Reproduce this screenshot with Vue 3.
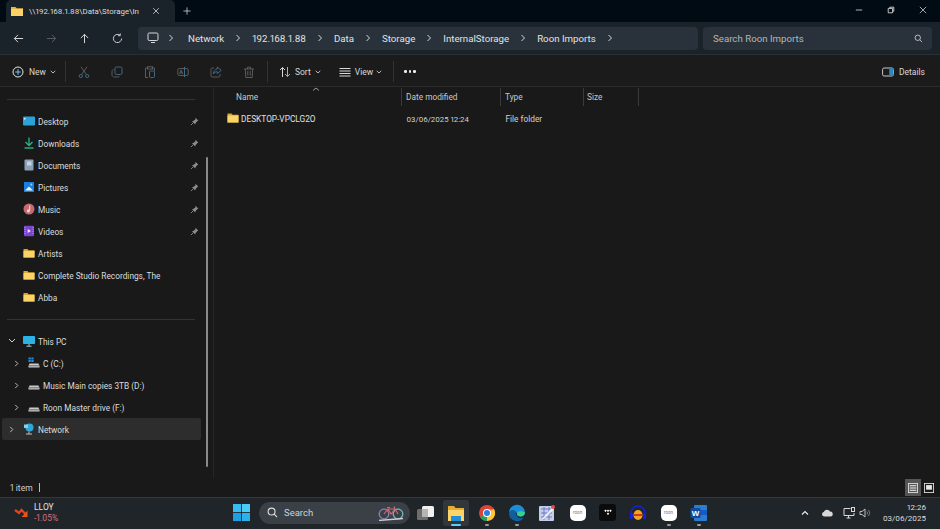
<script setup>
const crumbs = ['Network', '192.168.1.88', 'Data', 'Storage', 'InternalStorage', 'Roon Imports']

const quick = [
  { label: 'Desktop', icon: 'desktop', pin: true },
  { label: 'Downloads', icon: 'downloads', pin: true },
  { label: 'Documents', icon: 'documents', pin: true },
  { label: 'Pictures', icon: 'pictures', pin: true },
  { label: 'Music', icon: 'music', pin: true },
  { label: 'Videos', icon: 'videos', pin: true },
  { label: 'Artists', icon: 'folder' },
  { label: 'Complete Studio Recordings, The', icon: 'folder' },
  { label: 'Abba', icon: 'folder' }
]

const drives = [
  { label: 'C (C:)', win: true },
  { label: 'Music Main copies 3TB (D:)' },
  { label: 'Roon Master drive (F:)' }
]

const columns = [
  { label: 'Name', width: 187, pad: 21 },
  { label: 'Date modified', width: 99, pad: 4 },
  { label: 'Type', width: 83, pad: 4 },
  { label: 'Size', width: 55, pad: 3 }
]
</script>

<template>
  <div class="screen">
    <!-- Tabs -->
    <div class="titlebar">
      <div class="tab">
        <svg class="tab-folder" viewBox="0 0 12 12"><path d="M0 2h4.5l1.2 1.2H12V11H0z" fill="#e9b33f"/><path d="M0 4h12v7H0z" fill="#fbd266"/></svg>
        <span class="tab-title">\\192.168.1.88\Data\Storage\In</span>
        <svg class="tab-close" viewBox="0 0 10 10"><path d="M1.5 1.5l7 7M8.5 1.5l-7 7" stroke="#d8d8d8" fill="none"/></svg>
      </div>
      <svg class="tab-add" viewBox="0 0 10 10"><path d="M5 .5v9M.5 5h9" stroke="#d0d0d0" fill="none"/></svg>
      <div class="window-btns">
        <svg viewBox="0 0 10 10"><path d="M1 5h8" stroke="#bbb" stroke-width="1.2"/></svg>
        <svg viewBox="0 0 10 10"><path d="M1.5 3h5.5v5.5H1.5zM3.5 3V1.5h5v5H7" stroke="#ccc" fill="none" stroke-width="1.2"/></svg>
        <svg viewBox="0 0 10 10"><path d="M1 1l8 8M9 1l-8 8" stroke="#ccc" fill="none"/></svg>
      </div>
    </div>

    <!-- Address row -->
    <div class="addressbar">
      <div class="nav">
        <svg viewBox="0 0 12 12"><path d="M11 6H1.5M5.5 2L1.5 6l4 4" stroke="#e6e6e6" fill="none"/></svg>
        <svg viewBox="0 0 12 12"><path d="M1 6h9.5M6.5 2l4 4-4 4" stroke="#5d6367" fill="none"/></svg>
        <svg viewBox="0 0 12 12"><path d="M6 11V1.5M2 5.5l4-4 4 4" stroke="#e6e6e6" fill="none"/></svg>
        <svg viewBox="0 0 12 12"><path d="M10.5 6A4.5 4.5 0 1 1 8.6 2.3M9 .5v2.4H6.6" stroke="#dcdcdc" fill="none"/></svg>
      </div>
      <div class="crumbs">
        <svg class="crumb-pc" viewBox="0 0 12 12"><rect x="1" y="1" width="10" height="7.5" rx="1.2" stroke="#d8d8d8" fill="none"/><path d="M4 10.5h4" stroke="#d8d8d8"/></svg>
        <template v-for="c in crumbs" :key="c">
          <svg class="chev" viewBox="0 0 6 8"><path d="M1.5 1l3 3-3 3" stroke="#d8d8d8" fill="none"/></svg>
          <span class="crumb">{{ c }}</span>
        </template>
        <svg class="chev" viewBox="0 0 6 8"><path d="M1.5 1l3 3-3 3" stroke="#d8d8d8" fill="none"/></svg>
      </div>
      <div class="searchbox">
        <span>Search Roon Imports</span>
        <svg viewBox="0 0 10 10"><circle cx="4.2" cy="4.2" r="3" stroke="#c8c8c8" fill="none"/><path d="M6.4 6.4L9 9" stroke="#c8c8c8"/></svg>
      </div>
    </div>

    <!-- Command bar -->
    <div class="toolbar">
      <div class="new">
        <svg class="cmd-ico" viewBox="0 0 12 12"><circle cx="6" cy="6" r="5" stroke="#e4e4e4" fill="none"/><path d="M6 3.2v5.6M3.2 6h5.6" stroke="#6cc4ee"/></svg>
        <span>New</span>
        <svg class="caret" viewBox="0 0 6 4"><path d="M.7 .8L3 3l2.3-2.2" stroke="#bbb" fill="none"/></svg>
      </div>
      <i class="tool-div first"></i>
      <div class="disabled-tools">
        <svg viewBox="0 0 12 12"><circle cx="2.8" cy="10" r="1.6" stroke="#3e6a85" fill="none"/><circle cx="9.2" cy="10" r="1.6" stroke="#3e6a85" fill="none"/><path d="M3.6 8.6L9 .8M8.4 8.6L3 .8" stroke="#5c5c5c" fill="none"/></svg>
        <svg viewBox="0 0 12 12"><rect x="4" y="1" width="7" height="7.5" rx="1.5" stroke="#3e6a85" fill="none"/><path d="M2.6 3.4C1.6 3.8 1 4.4 1 5.5v3.2C1 10 2 11 3.4 11h3.4c.8 0 1.4-.4 1.7-1" stroke="#5c5c5c" fill="none"/></svg>
        <svg viewBox="0 0 12 12"><path d="M3 2H1.5v9.500H4M9 2h1.500v3" stroke="#5c5c5c" fill="none"/><rect x="3.500" y=".8" width="5" height="2.200" stroke="#5c5c5c" fill="none"/><rect x="5.500" y="5" width="5" height="6.500" rx="1" stroke="#3e6a85" fill="none"/></svg>
        <svg viewBox="0 0 12 12"><rect x=".8" y="2.500" width="10.400" height="7" rx="1.500" stroke="#5c5c5c" fill="none"/><path d="M2.600 8l1.500-4 1.500 4M3.200 6.800h1.800" stroke="#5c5c5c" fill="none"/><path d="M7.500 .8v10.400" stroke="#3e6a85"/></svg>
        <svg viewBox="0 0 12 12"><path d="M4 2H2.300A1.300 1.300 0 0 0 1 3.300v6.400A1.300 1.300 0 0 0 2.300 11h6.400A1.300 1.300 0 0 0 10 9.700V8" stroke="#5c5c5c" fill="none"/><path d="M7.200 1l4 3.300-4 3.300V5.700C5.500 5.700 4 6.500 3.500 8c0-3 1.500-4.800 3.700-5z" stroke="#3e6a85" fill="none"/></svg>
        <svg viewBox="0 0 12 12"><path d="M1 3h10M4.500 3V1.200h3V3M2.300 3l.5 8.500h6.400l.5-8.500M4.800 5v4.500M7.200 5v4.500" stroke="#5c5c5c" fill="none"/></svg>
      </div>
      <i class="tool-div second"></i>
      <div class="sort">
        <svg class="cmd-ico" viewBox="0 0 12 12"><path d="M3.500 11V1.500M1 4l2.500-2.500L6 4" stroke="#d8d8d8" fill="none"/><path d="M8.500 1v9.500M6 8l2.500 2.500L11 8" stroke="#6cc4ee" fill="none"/></svg>
        <span>Sort</span>
        <svg class="caret" viewBox="0 0 6 4"><path d="M.7 .8L3 3l2.300-2.200" stroke="#bbb" fill="none"/></svg>
      </div>
      <div class="view">
        <svg class="cmd-ico" viewBox="0 0 12 12"><path d="M.5 2.500h11M.5 5h11M.5 7.500h11M.5 10h11" stroke="#d8d8d8" fill="none"/></svg>
        <span>View</span>
        <svg class="caret" viewBox="0 0 6 4"><path d="M.7 .8L3 3l2.300-2.200" stroke="#bbb" fill="none"/></svg>
      </div>
      <i class="tool-div third"></i>
      <div class="more"><b></b><b></b><b></b></div>
      <div class="details">
        <svg class="cmd-ico" viewBox="0 0 12 12"><rect x=".6" y="2" width="10.800" height="8" rx="1.500" stroke="#c8c8c8" fill="none"/><rect x="7.200" y="2" width="4.200" height="8" rx="1" fill="#2f86b8"/></svg>
        <span>Details</span>
      </div>
    </div>

    <div class="body">
      <!-- Navigation pane -->
      <aside class="sidebar">
        <div class="sep"></div>
        <div v-for="r in quick" :key="r.label" class="row">
          <svg class="row-ico" viewBox="0 0 12 12">
            <template v-if="r.icon === 'desktop'">
              <rect y="1.500" width="12" height="9" rx="1" fill="#2ba3d9"/><rect x="1" y="3" width="1.500" height="1.500" fill="#d9f2ff"/>
            </template>
            <template v-else-if="r.icon === 'downloads'">
              <path d="M6 .5v7.500M2.500 5L6 8.500 9.500 5" stroke="#27b58c" stroke-width="1.300" fill="none"/><path d="M1.500 11h9" stroke="#27b58c" stroke-width="1.400"/>
            </template>
            <template v-else-if="r.icon === 'documents'">
              <rect x="1.500" y=".5" width="9" height="11" rx="1" fill="#8ca1b8"/><rect x="4" y="2.500" width="4.500" height="4" fill="#c5d4e2"/>
            </template>
            <template v-else-if="r.icon === 'pictures'">
              <rect x="1" y="1" width="10" height="10" fill="#1a7fe0"/><path d="M2 9.500L6 5.500l4 4z" fill="#e8f3fb"/><circle cx="8.300" cy="3.500" r="1" fill="#9dd3f7"/>
            </template>
            <template v-else-if="r.icon === 'music'">
              <circle cx="6" cy="6" r="5.500" fill="#c76a6f"/><path d="M6.700 2.500v5" stroke="#f5dfe2" stroke-width="1"/><circle cx="5.400" cy="8" r="1.400" fill="#f5dfe2"/>
            </template>
            <template v-else-if="r.icon === 'videos'">
              <rect x="1" y=".8" width="10" height="10.400" rx="1" fill="#7b45cf"/><path d="M4.700 4v4l3.300-2z" fill="#f0e8fb"/><path d="M2 2v8M10 2v8" stroke="#b99aea" stroke-dasharray="1 1"/>
            </template>
            <template v-else>
              <path d="M.5 2h4l1 1.200h6V10.500H.5z" fill="#dca431"/><path d="M.5 4h11v6.500H.5z" fill="#fbd468"/>
            </template>
          </svg>
          <span class="row-label">{{ r.label }}</span>
          <svg v-if="r.pin" class="pin" viewBox="0 0 10 10"><path d="M6 .8l3.200 3.200-1.300.6-1.800 2.400-.3 1.400L2.200 4.800l1.400-.3L6 2.700z" fill="#8d8d8d"/><path d="M3.600 6.400L1 9" stroke="#8d8d8d"/></svg>
        </div>
        <div class="sep lower"></div>
        <div class="row">
          <svg class="tree open" viewBox="0 0 8 6"><path d="M1 1l3 3 3-3" stroke="#d0d0d0" fill="none"/></svg>
          <svg class="row-ico" viewBox="0 0 12 12"><rect y="1" width="12" height="8" rx=".8" fill="#2cb2e4"/><path d="M6 9v1.800M3.500 11.200h5" stroke="#a9cfe0"/></svg>
          <span class="row-label">This PC</span>
        </div>
        <div v-for="d in drives" :key="d.label" class="row drive">
          <svg class="tree" viewBox="0 0 6 8"><path d="M1.500 1l3 3-3 3" stroke="#d0d0d0" fill="none"/></svg>
          <svg class="row-ico" viewBox="0 0 12 12">
            <template v-if="d.win"><path d="M.5 .5h2.300v2H.5zM3.300 .5h2.300v2H3.300zM.5 3h2.300v2H.5zM3.300 3h2.300v2H3.300z" fill="#1c8fe0"/></template>
            <path d="M1.500 6.500h9l1 2.500v1.500H.5V9z" fill="#c9c9c9"/><path d="M1 8.800h10" stroke="#6d6d6d"/>
          </svg>
          <span class="row-label">{{ d.label }}</span>
        </div>
        <div class="row selected">
          <svg class="tree" viewBox="0 0 6 8"><path d="M1.500 1l3 3-3 3" stroke="#d0d0d0" fill="none"/></svg>
          <svg class="row-ico" viewBox="0 0 12 12"><circle cx="6.500" cy="4.500" r="4" fill="#2fa8d8"/><path d="M1 1.500h4v3.500H1z" fill="#7fd3f0"/><path d="M6 8.500v2.300M3 11h6" stroke="#b8c8d0"/></svg>
          <span class="row-label">Network</span>
        </div>
        <div class="thumb"></div>
      </aside>

      <!-- File list -->
      <main class="list">
        <div class="head">
          <svg class="sort-mark" viewBox="0 0 8 4"><path d="M1 3.500L4 1l3 2.500" stroke="#9a9a9a" fill="none"/></svg>
          <div v-for="c in columns" :key="c.label" class="col" :style="{ width: c.width + 'px', paddingLeft: c.pad + 'px' }">{{ c.label }}</div>
        </div>
        <div class="file">
          <svg class="file-ico" viewBox="0 0 12 12"><path d="M.5 1.500h4l1 1.200h6V10.500H.5z" fill="#dca431"/><path d="M.5 3.500h11v7H.5z" fill="#fbd468"/></svg>
          <span class="file-name">DESKTOP-VPCLG2O</span>
          <span class="file-date">03/06/2025 12:24</span>
          <span>File folder</span>
        </div>
      </main>
    </div>

    <!-- Status bar -->
    <div class="status">
      <span>1 item</span>
      <i class="status-bar"></i>
      <div class="layout-btns">
        <div class="layout-btn on">
          <svg viewBox="0 0 12 12"><rect x=".5" y=".5" width="11" height="11" fill="none" stroke="#e6e6e6"/><path d="M2 3h8M2 5h8M2 7h8M2 9h8" stroke="#e6e6e6"/></svg>
        </div>
        <div class="layout-btn">
          <svg viewBox="0 0 12 12"><rect x=".5" y=".5" width="11" height="11" fill="none" stroke="#e6e6e6"/><rect x="2.500" y="2.500" width="7" height="5.500" fill="#e6e6e6"/></svg>
        </div>
      </div>
    </div>

    <!-- Taskbar -->
    <div class="taskbar">
      <div class="widget">
        <svg viewBox="0 0 16 12"><path d="M1 3l4 3 2.500-3L12 7.500" stroke="#e8431c" stroke-width="2.200" fill="none"/><path d="M13.500 3.500v6.500H7.500z" fill="#e8561c"/></svg>
        <div class="ticker">
          <span class="ticker-name">LLOY</span>
          <span class="ticker-val">-1.05%</span>
        </div>
      </div>
      <svg class="winlogo" viewBox="0 0 16 16">
        <rect width="7.600" height="7.600" fill="#37bdf0"/><rect x="8.400" width="7.600" height="7.600" fill="#49ccf5"/>
        <rect y="8.400" width="7.600" height="7.600" fill="#1f9fe3"/><rect x="8.400" y="8.400" width="7.600" height="7.600" fill="#2cb2ea"/>
      </svg>
      <div class="tb-search">
        <svg class="tb-lens" viewBox="0 0 12 12"><circle cx="5" cy="5" r="3.800" stroke="#e0e0e0" fill="none" stroke-width="1.200"/><path d="M7.800 7.800L11 11" stroke="#e0e0e0" stroke-width="1.200"/></svg>
        <span>Search</span>
        <svg class="bike" viewBox="0 0 26 16">
          <circle cx="6" cy="9" r="4.800" stroke="#8d7fb0" fill="none" stroke-width="1.300"/>
          <circle cx="20" cy="9" r="4.800" stroke="#74b4c4" fill="none" stroke-width="1.300"/>
          <path d="M6 9l4-5h7l3 5M10 4l3 5 4-5M9 2.500h3M16 1.500l1 2.500" stroke="#d9656f" fill="none" stroke-width="1.200"/>
          <path d="M1 15.500l24-2" stroke="#c9cfd4" stroke-width="1.300"/>
        </svg>
      </div>
      <div class="apps">
        <div class="app">
          <svg viewBox="0 0 18 16"><rect y="4" width="11" height="11" rx="1.500" fill="#6d6d6d"/><rect x="5" y="1" width="12" height="11" rx="1.500" fill="#f0f0f0"/><rect x="5" y="4" width="6" height="8" fill="#b5b5b5"/></svg>
        </div>
        <div class="app active">
          <svg viewBox="0 0 18 18"><path d="M1 2h6l1.500 2H17v13H1z" fill="#e6ad2e"/><path d="M1 6h16v11H1z" fill="#fcd467"/><rect x="4" y="12" width="10" height="5" fill="#1f8fd6"/></svg>
          <i class="dot wide"></i>
        </div>
        <div class="app">
          <svg viewBox="0 0 18 18"><circle cx="9" cy="9" r="8" fill="#dd4437"/><path d="M9 9L2 13a8 8 0 0 0 7 4z" fill="#1ea362"/><path d="M9 9l7-4a8 8 0 0 1-3 11l-4 1z" fill="#fcc934"/><path d="M9 5h7l-3 7-8 1z" fill="#fcc934" opacity=".4"/><circle cx="9" cy="9" r="4" fill="#fff"/><circle cx="9" cy="9" r="3" fill="#2a7de1"/></svg>
          <i class="dot"></i>
        </div>
        <div class="app">
          <svg viewBox="0 0 18 18"><path d="M1 9a8 8 0 0 1 16-.5c0 3-2.500 4-4.500 4-2.500 0-3.500-1-3.500-2.500 0-3-8-3-8-1z" fill="#1a8fd8"/><path d="M1 9c1-4 7-4 7 0 0 4 4 7 8 4a8 8 0 0 1-15-4z" fill="#0f5f9f"/><path d="M17 8.500c0 2-2 4-4.500 4-2.500 0-3.500-1-3.500-2.500 0-2 2-4 8-1.500z" fill="#38d08a"/></svg>
          <i class="dot"></i>
        </div>
        <div class="app">
          <svg viewBox="0 0 18 18"><rect x="1" y="2" width="15" height="15" rx="1" fill="#c6cdea"/><path d="M3 5h11M3 9h11M3 13h11M6 3v13M11 3v13" stroke="#5a6bc4" stroke-width=".8"/><path d="M4 15l10-11 1.500 1.500L6 15z" fill="#f2f2f2"/><circle cx="15" cy="3" r="2" fill="#d9534f"/></svg>
        </div>
        <div class="app"><div class="roon">roon</div></div>
        <div class="app">
          <div class="tidal"><svg viewBox="0 0 12 8"><path d="M3 .5l1.500 1.500L3 3.500 1.500 2zM6 .5l1.500 1.500L6 3.500 4.500 2zM9 .5l1.500 1.500L9 3.500 7.500 2zM6 4l1.500 1.500L6 7 4.500 5.500z" fill="#fff"/></svg></div>
        </div>
        <div class="app">
          <svg viewBox="0 0 18 18"><path d="M2 11V9a7 7 0 0 1 14 0v2" stroke="#1323d8" stroke-width="1.500" fill="none"/><rect x="1" y="9" width="3" height="6" rx="1.200" fill="#1323d8"/><rect x="14" y="9" width="3" height="6" rx="1.200" fill="#1323d8"/><ellipse cx="9" cy="11" rx="4.500" ry="5" fill="#f2a51c"/><path d="M4.500 11h9" stroke="#d42a1e" stroke-width="1.800"/></svg>
        </div>
        <div class="app"><div class="roon">roon</div><i class="dot"></i></div>
        <div class="app">
          <svg viewBox="0 0 18 18"><rect x="4" y="1" width="13" height="16" rx="1" fill="#2b7cd3"/><path d="M4 6h13v5H4z" fill="#185abd"/><rect x=".5" y="4" width="10" height="10" rx="1" fill="#124a9e"/><text x="5.500" y="12" text-anchor="middle" class="word-w">W</text></svg>
          <i class="dot"></i>
        </div>
      </div>
      <div class="tray">
        <svg class="tray-chev" viewBox="0 0 8 6"><path d="M1 4.500L4 1.500l3 3" stroke="#eee" fill="none" stroke-width="1.100"/></svg>
        <svg class="tray-cloud" viewBox="0 0 12 8"><path d="M3 7.500a2.300 2.300 0 0 1-.3-4.500A3.500 3.500 0 0 1 9 2.500a2.500 2.500 0 0 1 .5 5z" fill="#d8d8d8"/></svg>
        <svg class="tray-net" viewBox="0 0 12 12"><path d="M7.500 1.500H1v7h10V6M3.500 11h4M5.500 8.500V11" stroke="#d8d8d8" fill="none"/><rect x="8.500" y=".5" width="3" height="4" stroke="#d8d8d8" fill="none"/></svg>
        <svg class="tray-vol" viewBox="0 0 12 12"><path d="M1 4.500h2l3-2.500v8L3 7.500H1z" stroke="#bdbdbd" fill="none"/><path d="M8 4.500a2.500 2.500 0 0 1 0 3M9.500 3a4.500 4.500 0 0 1 0 6" stroke="#777" fill="none"/></svg>
        <div class="clock">
          <span>12:26</span>
          <span>03/06/2025</span>
        </div>
      </div>
    </div>
  </div>
</template>

<style scoped>
.screen {
  width: 940px;
  height: 529px;
  display: flex;
  flex-direction: column;
  overflow: hidden;
  background: #191919;
  color: #d6d6d6;
  font-family: Roboto, "Noto Sans", sans-serif;
  font-size: 9px;
  font-feature-settings: "pnum";
}

svg {
  display: block;
  flex: none;
}

/* title bar */
.titlebar {
  height: 22px;
  flex: none;
  display: flex;
  align-items: flex-end;
  background: #010b14;
  padding-left: 6px;
}
.tab {
  width: 164px;
  height: 22px;
  display: flex;
  align-items: center;
  background: #1b232a;
  border-radius: 5px 5px 0 0;
  padding-left: 5px;
}
.tab-folder {
  width: 12px;
  height: 12px;
}
.tab-title {
  width: 114px;
  margin-left: 6px;
  white-space: nowrap;
  font-size: 7.9px;
  color: #dcdcdc;
}
.tab-close {
  width: 8px;
  height: 8px;
  margin-left: 9px;
}
.tab-add {
  width: 8px;
  height: 8px;
  margin: 0 0 7px 8px;
}
.window-btns {
  margin-left: auto;
  align-self: center;
  display: flex;
  gap: 24px;
  padding-right: 13px;
}
.window-btns svg {
  width: 8px;
  height: 8px;
  margin-top: -3px;
}

/* address row */
.addressbar {
  height: 33px;
  flex: none;
  display: flex;
  align-items: center;
  background: #1b232a;
  border-bottom: 1px solid #2a3036;
  box-sizing: border-box;
}
.nav {
  width: 138px;
  display: flex;
  gap: 22px;
  padding-left: 13px;
  box-sizing: border-box;
}
.nav svg {
  width: 11px;
  height: 11px;
}
.crumbs {
  width: 560px;
  height: 23px;
  display: flex;
  align-items: center;
  background: #29323a;
  border-radius: 4px;
  font-size: 9.7px;
  color: #e2e2e2;
  padding-left: 9px;
  box-sizing: border-box;
}
.crumb-pc {
  width: 12px;
  height: 12px;
}
.chev {
  width: 6px;
  height: 8px;
  margin: 0 11px 0 11px;
}
.crumb-pc + .chev {
  margin-left: 9px;
  margin-right: 14px;
}
.searchbox {
  width: 229px;
  height: 23px;
  margin-left: 5px;
  display: flex;
  align-items: center;
  justify-content: space-between;
  background: #29323a;
  border-radius: 4px;
  padding: 0 9px 0 10px;
  box-sizing: border-box;
  font-size: 9.7px;
  color: #b3b6b9;
}
.searchbox svg {
  width: 9px;
  height: 9px;
}

/* command bar */
.toolbar {
  height: 32px;
  flex: none;
  display: flex;
  align-items: center;
  background: #1c1b1b;
  border-bottom: 1px solid #2c2c2c;
  box-sizing: border-box;
  padding-top: 2px;
  color: #d8d8d8;
  font-size: 8.5px;
}
.cmd-ico {
  width: 12px;
  height: 12px;
}
.caret {
  width: 6px;
  height: 4px;
}
.new {
  display: flex;
  align-items: center;
  margin-left: 12px;
}
.new span {
  margin: 0 4px 0 5px;
}
.tool-div {
  width: 1px;
  height: 21px;
  background: #333;
}
.tool-div.first {
  margin-left: 9px;
}
.disabled-tools {
  display: flex;
  gap: 21px;
  margin-left: 12px;
}
.disabled-tools svg {
  width: 12px;
  height: 12px;
}
.tool-div.second {
  margin-left: 12px;
}
.sort {
  display: flex;
  align-items: center;
  margin-left: 11px;
}
.sort span {
  margin: 0 4px;
}
.view span {
  margin: 0 3px 0 4px;
}
.view {
  display: flex;
  align-items: center;
  margin-left: 18px;
}
.tool-div.third {
  margin-left: 11px;
}
.more {
  display: flex;
  gap: 2px;
  margin-left: 10px;
}
.more b {
  width: 2.5px;
  height: 2.5px;
  border-radius: 50%;
  background: #eee;
}
.details {
  margin-left: auto;
  margin-right: 15px;
  display: flex;
  align-items: center;
  gap: 5px;
}

/* panes */
.body {
  flex: 1;
  min-height: 0;
  display: flex;
}
.sidebar {
  position: relative;
  width: 214px;
  flex: none;
  border-right: 1px solid #262626;
  box-sizing: border-box;
  padding: 12px 0 0 2px;
  font-size: 8.3px;
}
.sep {
  height: 1px;
  width: 188px;
  margin: 0 0 10px 5px;
  background: #333;
}
.sep.lower {
  margin-top: 11px;
}
.row {
  height: 22px;
  width: 199px;
  display: flex;
  align-items: center;
  padding-left: 21px;
  box-sizing: border-box;
  color: #dcdcdc;
  white-space: nowrap;
  border-radius: 2px;
}
.row-label {
  padding-top: 1px;
}
.row-ico {
  width: 12px;
  height: 12px;
  margin-right: 3px;
}
.pin {
  width: 9px;
  height: 9px;
  margin-left: auto;
  margin-right: 2px;
}
.tree {
  width: 7px;
  height: 7px;
  margin-left: -15px;
  margin-right: 8px;
}
.tree.open {
  width: 8px;
  height: 6px;
  margin-right: 7px;
}
.drive {
  padding-left: 26px;
}
.selected {
  background: #2d2d2d;
}
.thumb {
  position: absolute;
  right: 5px;
  top: 70px;
  width: 2px;
  height: 310px;
  background: #8a8a8a;
  border-radius: 1px;
}

/* file list */
.list {
  flex: 1;
  min-width: 0;
  color: #d2d2d2;
}
.head {
  position: relative;
  height: 19px;
  display: flex;
  align-items: center;
  margin-left: 1px;
  font-size: 8.3px;
  color: #c8c8c8;
}
.col {
  height: 18px;
  display: flex;
  align-items: center;
  box-sizing: border-box;
  border-right: 1px solid #3a3a3a;
}
.sort-mark {
  position: absolute;
  left: 97px;
  top: 0;
  width: 8px;
  height: 4px;
}
.file {
  height: 22px;
  margin-top: 2px;
  display: flex;
  align-items: center;
  font-size: 8.3px;
}
.file-ico {
  width: 12px;
  height: 12px;
  margin-left: 13px;
  margin-top: -2px;
}
.file-name {
  width: 165.500px;
  margin-left: 2px;
  color: #e0e0e0;
}
.file-date {
  width: 99px;
  font-size: 7.8px;
}

/* status bar */
.status {
  height: 19px;
  flex: none;
  display: flex;
  align-items: center;
  background: #191919;
  padding-left: 10px;
  font-size: 8.5px;
  color: #cfcfcf;
}
.status-bar {
  width: 1px;
  height: 9px;
  margin-left: 6px;
  background: #bbb;
}
.layout-btns {
  margin-left: auto;
  margin-right: 3px;
  display: flex;
}
.layout-btn {
  width: 16px;
  height: 17px;
  display: flex;
  align-items: center;
  justify-content: center;
}
.layout-btn svg {
  width: 10px;
  height: 10px;
}
.layout-btn.on {
  background: #555;
}

/* taskbar */
.taskbar {
  height: 32px;
  flex: none;
  display: flex;
  align-items: center;
  background: #20252a;
  border-top: 1px solid #34383c;
  box-sizing: border-box;
  padding-bottom: 2px;
}
.widget {
  width: 233px;
  display: flex;
  align-items: center;
  padding-left: 14px;
  box-sizing: border-box;
}
.widget svg {
  width: 16px;
  height: 12px;
}
.ticker {
  display: flex;
  flex-direction: column;
  margin-left: 4px;
  line-height: 11px;
  font-size: 8.500px;
}
.ticker-name {
  color: #e4e4e4;
}
.ticker-val {
  color: #d8707e;
}
.winlogo {
  width: 17px;
  height: 17px;
}
.tb-search {
  width: 151px;
  height: 22px;
  margin-left: 9px;
  display: flex;
  align-items: center;
  background: #3a4046;
  border-radius: 11px;
  box-sizing: border-box;
  padding-left: 8px;
  font-size: 9.500px;
  color: #cfd2d4;
}
.tb-lens {
  width: 11px;
  height: 11px;
  margin-right: 6px;
}
.bike {
  width: 26px;
  height: 16px;
  margin-left: auto;
  margin-right: 6px;
}
.apps {
  display: flex;
  margin-left: 1px;
}
.app {
  position: relative;
  width: 30.300px;
  height: 26px;
  display: flex;
  align-items: center;
  justify-content: center;
}
.app svg {
  width: 18px;
  height: 18px;
}
.app.active {
  background: #32373c;
  border-radius: 3px;
  width: 26px;
  margin: 0 2.150px;
}
.dot {
  position: absolute;
  bottom: 0;
  left: 50%;
  width: 4px;
  height: 1.500px;
  margin-left: -2px;
  background: #9a9a9a;
  border-radius: 1px;
}
.dot.wide {
  width: 10px;
  margin-left: -5px;
  background: #60cdff;
}
.roon {
  width: 16px;
  height: 16px;
  background: #fff;
  border-radius: 5px;
  display: flex;
  align-items: center;
  justify-content: center;
  font-size: 4.500px;
  color: #777;
}
.tidal {
  width: 17px;
  height: 17px;
  background: #0b0b0b;
  border-radius: 3px;
  display: flex;
  align-items: center;
  justify-content: center;
}
.tidal svg {
  width: 10px;
  height: 7px;
}
.word-w {
  font-size: 8px;
  font-weight: 700;
  fill: #fff;
  font-family: "Liberation Sans", sans-serif;
}
.tray {
  margin-left: auto;
  display: flex;
  align-items: center;
  padding-right: 14px;
}
.tray-chev {
  width: 8px;
  height: 6px;
}
.tray-cloud {
  width: 12px;
  height: 8px;
  margin-left: 12px;
}
.tray-net {
  width: 12px;
  height: 12px;
  margin-left: 10px;
}
.tray-vol {
  width: 12px;
  height: 12px;
  margin-left: 4px;
}
.clock {
  display: flex;
  flex-direction: column;
  align-items: flex-end;
  margin-left: 12px;
  line-height: 11px;
  font-size: 8px;
  color: #dedede;
}
</style>

<style>
html, body {
  margin: 0;
  background: #191919;
}
</style>
